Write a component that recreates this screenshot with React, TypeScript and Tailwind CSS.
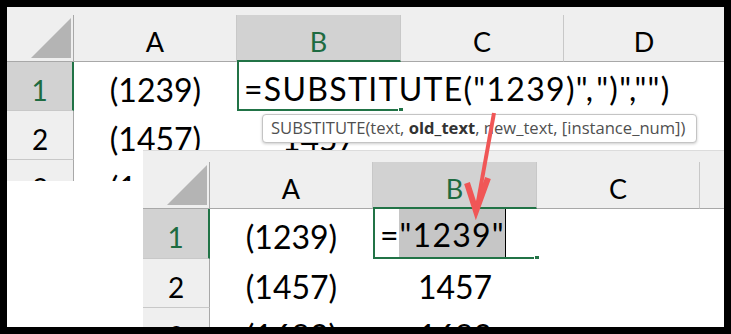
import clsx from 'clsx';

function Corner() {
    return (
        <div className="bg-[#efefef] border-r border-r-[#a8a8a8] border-b border-b-[#a8a8a8] flex justify-end items-end pr-[2px] pb-[3px]">
            <svg width="40" height="40" viewBox="0 0 40 40">
                <polygon points="40,0 40,40 0,40" fill="#b4b4b4" />
            </svg>
        </div>
    );
}

function ColHead({ label, selected, last }: { label: string; selected?: boolean; last?: boolean }) {
    return (
        <div
            className={clsx(
                'flex items-center justify-center pt-[7px] text-[27px] leading-none',
                selected
                    ? 'bg-[#d2d2d2] text-[#1e6b41] border-b-2 border-b-[#217346]'
                    : 'bg-[#efefef] text-black border-b border-b-[#a8a8a8]',
                !last && 'border-r border-r-[#c8c8c8]'
            )}
        >
            {label}
        </div>
    );
}

function RowHead({ label, selected }: { label: string; selected?: boolean }) {
    return (
        <div
            className={clsx(
                'flex items-center justify-center pt-[7px] text-[28px] leading-none border-b border-b-[#c8c8c8]',
                selected
                    ? 'bg-[#d2d2d2] text-[#1e6b41] border-r-2 border-r-[#217346]'
                    : 'bg-[#efefef] text-black border-r border-r-[#a8a8a8]'
            )}
        >
            {label}
        </div>
    );
}

function Cell({ children }: { children?: React.ReactNode }) {
    return <div className="flex items-center justify-center pt-[6px] text-[32px] leading-none whitespace-nowrap">{children}</div>;
}

function FillHandle() {
    return <div className="absolute right-[-3px] bottom-[-3px] w-[6px] h-[5px] bg-[#217346] border border-white" />;
}

function TopSheet() {
    return (
        <div className="grid grid-cols-[67px_163px_164px_163px_160px] grid-rows-[8px_47px_49px_49px_49px] h-[174px] overflow-hidden font-['Lato',sans-serif] text-black bg-white">
            <div className="col-span-5 bg-[#efefef]" />
            <Corner />
            <ColHead label="A" />
            <ColHead label="B" selected />
            <ColHead label="C" />
            <ColHead label="D" last />

            <RowHead label="1" selected />
            <Cell>(1239)</Cell>
            <div className="relative z-10 flex items-center pl-[5px] pt-[6px] text-[32px] leading-none whitespace-nowrap tracking-[1.3px] border-l-2 border-b-2 border-[#217346]">
                <span>=SUBSTITUTE("1239)",</span>
                <span className="inline-block w-px h-[44px] bg-black mx-[1px]" />
                <span>")","")</span>
                <FillHandle />
            </div>
            <Cell />
            <Cell />

            <RowHead label="2" />
            <Cell>(1457)</Cell>
            <Cell>1457</Cell>
            <Cell />
            <Cell />

            <RowHead label="3" />
            <Cell>(1683)</Cell>
            <Cell>1683</Cell>
            <Cell />
            <Cell />
        </div>
    );
}

function BottomSheet() {
    return (
        <div className="relative grid grid-cols-[67px_163px_164px_163px_24px] grid-rows-[11px_47px_50px_49px_49px] w-[581px] h-[177px] overflow-hidden font-['Lato',sans-serif] text-black bg-white border-t border-t-[#dcdcdc]">
            <div className="col-span-5 bg-[#efefef]" />
            <Corner />
            <ColHead label="A" />
            <ColHead label="B" selected />
            <ColHead label="C" />
            <div className="bg-[#efefef] border-b border-b-[#a8a8a8]" />

            <RowHead label="1" selected />
            <Cell>(1239)</Cell>
            <div className="relative flex items-stretch pl-[5px] text-[32px] leading-none whitespace-nowrap border-l-2 border-b-2 border-[#217346]">
                <span className="flex items-center pt-[4px]">=</span>
                <span className="flex items-center pt-[4px] pl-[1px] bg-[#c6c6c6] tracking-[1.2px]">"1239"</span>
                <span className="w-px bg-black" />
                <FillHandle />
            </div>
            <Cell />
            <Cell />

            <RowHead label="2" />
            <Cell>(1457)</Cell>
            <Cell>1457</Cell>
            <Cell />
            <Cell />

            <RowHead label="3" />
            <Cell>(1683)</Cell>
            <Cell>1683</Cell>
            <Cell />
            <Cell />
        </div>
    );
}

export default function App() {
    return (
        <div className="w-[731px] h-[334px] bg-black p-[7px]">
            <div className="relative w-[717px] h-[320px] bg-white overflow-hidden">
                <TopSheet />
                <div className="relative -mt-[31px] ml-[136px] w-[581px]">
                    <BottomSheet />
                </div>

                <div className="absolute left-[255px] top-[107px] w-[435px] h-[29px] bg-white border border-[#c4c4c4] rounded-[4px] shadow-[0_1px_3px_rgba(0,0,0,0.2)] flex items-center pl-[8px] font-['Open_Sans',sans-serif] text-[16.6px] text-[#505050] whitespace-nowrap">
                    <span>
                        SUBSTITUTE(text, <b className="font-bold text-[#333]">old_text</b>, new_text, [instance_num])
                    </span>
                </div>

                <svg className="absolute inset-0 pointer-events-none" width="717" height="320" viewBox="0 0 717 320">
                    <line x1="487" y1="106" x2="470" y2="200" stroke="#f05656" strokeWidth="4" />
                    <polyline points="460,176 469,204 481,171" fill="none" stroke="#f05656" strokeWidth="6" strokeLinejoin="miter" />
                </svg>
            </div>
        </div>
    );
}
